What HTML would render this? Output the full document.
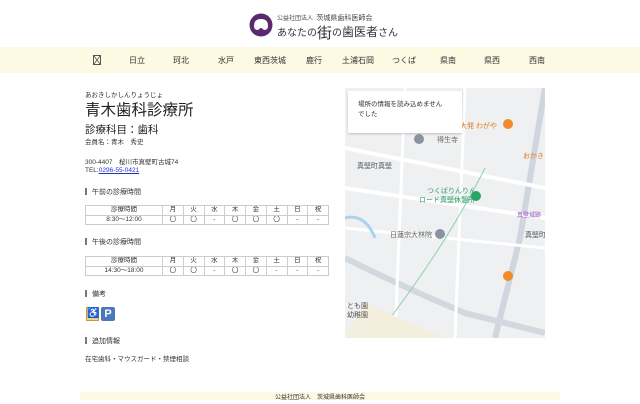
<!DOCTYPE html>
<html><head><meta charset="utf-8"><style>
*{margin:0;padding:0;box-sizing:border-box}
body{width:640px;height:400px;overflow:hidden;background:#fff;font-family:"Liberation Sans","Noto Sans CJK JP",sans-serif;color:#333;position:relative}
.abs{position:absolute;white-space:nowrap}
.nav{position:absolute;left:0;top:47px;width:640px;height:26px;background:#fdf9e3}
.nav span{position:absolute;top:8px;font-size:8px;color:#333;transform:translateX(-50%)}
table{position:absolute;left:85px;width:244px;table-layout:fixed;border-collapse:collapse;font-size:6.5px}
td{border:1px solid #ccc;height:9.5px;text-align:center;padding:0;line-height:8px;overflow:hidden}
td:first-child{width:77px}
.h{font-size:7px;left:85px}
.h:before{content:"";display:inline-block;width:2px;height:7px;background:#777;margin-right:5px;vertical-align:-1px}
</style></head><body>
<svg class="abs" style="left:249px;top:13px" width="24" height="24" viewBox="0 0 24 24"><circle cx="12" cy="12" r="11.5" fill="#5b2a6e"/><path d="M5 13 Q5 6 12 6 Q19 6 19 13 Q19 17 15 17 Q13 15 12 15 Q11 15 9 17 Q5 17 5 13Z" fill="#fff"/></svg>
<div class="abs" style="left:277px;top:13px;font-size:6px;color:#444">公益社団法人&nbsp;&nbsp;<span style="font-size:7px">茨城県歯科医師会</span></div>
<div class="abs" style="left:277px;top:22px;font-size:10px;color:#333">あなたの<span style="font-size:15px;vertical-align:-2px">街</span>の<span style="font-size:12px">歯医者</span>さん</div>
<div class="nav">
<svg style="position:absolute;left:93px;top:8px" width="8" height="10" viewBox="0 0 8 10"><rect x="0.5" y="0.5" width="7" height="9" fill="none" stroke="#555"/><path d="M1 1L7 9M7 1L1 9" stroke="#555" stroke-width="0.8"/></svg>
<span style="left:137px">日立</span><span style="left:181px">珂北</span><span style="left:226px">水戸</span><span style="left:270px">東西茨城</span><span style="left:314px">鹿行</span><span style="left:358px">土浦石岡</span><span style="left:404px">つくば</span><span style="left:448px">県南</span><span style="left:492px">県西</span><span style="left:537px">西南</span>
</div>
<div class="abs" style="left:85px;top:89px;font-size:6.5px">あおきしかしんりょうじょ</div>
<div class="abs" style="left:85px;top:98px;font-size:15.5px;color:#222">青木歯科診療所</div>
<div class="abs" style="left:85px;top:122px;font-size:10.5px;color:#222">診療科目：歯科</div>
<div class="abs" style="left:85px;top:136px;font-size:6.5px">会員名：青木　秀史</div>
<div class="abs" style="left:85px;top:156px;font-size:6.5px">300-4407　桜川市真壁町古城74</div>
<div class="abs" style="left:85px;top:167px;font-size:6.5px">TEL:<span style="color:#2233cc;text-decoration:underline">0296-55-0421</span></div>
<div class="abs h" style="top:187px">午前の診療時間</div>
<table style="top:205px"><tr><td>診療時間</td><td>月</td><td>火</td><td>水</td><td>木</td><td>金</td><td>土</td><td>日</td><td>祝</td></tr><tr><td>8:30～12:00</td><td>〇</td><td>〇</td><td>-</td><td>〇</td><td>〇</td><td>〇</td><td>-</td><td>-</td></tr></table>
<div class="abs h" style="top:237px">午後の診療時間</div>
<table style="top:256px"><tr><td>診療時間</td><td>月</td><td>火</td><td>水</td><td>木</td><td>金</td><td>土</td><td>日</td><td>祝</td></tr><tr><td>14:30～18:00</td><td>〇</td><td>〇</td><td>-</td><td>〇</td><td>〇</td><td>-</td><td>-</td><td>-</td></tr></table>
<div class="abs h" style="top:289px">備考</div>
<div class="abs" style="left:86px;top:307px;width:13px;height:14px;background:#f3d58a;border:1px solid #c89b3a;font-size:10px;color:#b07a10;text-align:center;line-height:12px">♿</div>
<div class="abs" style="left:101px;top:307px;width:14px;height:14px;background:#4a78b8;border-radius:2px;color:#fff;font-weight:bold;font-size:11px;text-align:center;line-height:14px">P</div>
<div class="abs h" style="top:336px">追加情報</div>
<div class="abs" style="left:85px;top:353px;font-size:6.5px">在宅歯科・マウスガード・禁煙相談</div>
<div class="abs" style="left:345px;top:88px;width:200px;height:250px;background:#eef0f2;overflow:hidden">
<svg width="200" height="250" viewBox="0 0 200 250">
<path d="M150 250 L175 150 L195 30 L200 0" stroke="#cfd6de" stroke-width="6" fill="none"/>
<path d="M0 170 Q60 200 120 225 L200 245" stroke="#d2d8de" stroke-width="6" fill="none"/>
<path d="M0 60 L200 100" stroke="#fff" stroke-width="4" fill="none"/>
<path d="M0 100 L200 130" stroke="#fff" stroke-width="4" fill="none"/>
<path d="M0 140 L200 160" stroke="#fff" stroke-width="3" fill="none"/>
<path d="M60 0 L50 250" stroke="#fff" stroke-width="3" fill="none"/>
<path d="M120 0 L110 250" stroke="#fff" stroke-width="3" fill="none"/>
<path d="M140 80 Q100 160 30 250" stroke="#8fd0b0" stroke-width="1" fill="none"/>
<path d="M0 130 Q20 125 30 150" stroke="#a8d4ef" stroke-width="3" fill="none"/>
<path d="M20 215 L100 250 L0 250Z" fill="#f3eedd"/>
<circle cx="163" cy="36" r="5" fill="#f08a2c"/><circle cx="163" cy="188" r="5" fill="#f08a2c"/>
<circle cx="131" cy="108" r="5" fill="#2aa566"/><circle cx="95" cy="146" r="5" fill="#8a949e"/><circle cx="74" cy="51" r="5" fill="#8a949e"/>
<text x="115" y="40" font-size="7" fill="#e07c20" font-family="Liberation Sans,Noto Sans CJK JP,sans-serif">大発 わがや</text>
<text x="178" y="70" font-size="7" fill="#e07c20" font-family="Liberation Sans,Noto Sans CJK JP,sans-serif">おかき</text>
<text x="92" y="54" font-size="7" fill="#666" font-family="Liberation Sans,Noto Sans CJK JP,sans-serif">得生寺</text>
<text x="12" y="80" font-size="7" fill="#555" font-family="Liberation Sans,Noto Sans CJK JP,sans-serif">真壁町真壁</text>
<text x="82" y="105" font-size="7" fill="#2a9d5f" font-family="Liberation Sans,Noto Sans CJK JP,sans-serif">つくばりんりん</text>
<text x="74" y="114" font-size="7" fill="#2a9d5f" font-family="Liberation Sans,Noto Sans CJK JP,sans-serif">ロード真壁休憩所</text>
<text x="172" y="129" font-size="6" fill="#9a4fc0" font-family="Liberation Sans,Noto Sans CJK JP,sans-serif">真壁城跡</text>
<text x="45" y="149" font-size="7" fill="#666" font-family="Liberation Sans,Noto Sans CJK JP,sans-serif">日蓮宗大林院</text>
<text x="180" y="149" font-size="7" fill="#555" font-family="Liberation Sans,Noto Sans CJK JP,sans-serif">真壁町</text>
<text x="2" y="220" font-size="7" fill="#555" font-family="Liberation Sans,Noto Sans CJK JP,sans-serif">とも園</text>
<text x="2" y="229" font-size="7" fill="#555" font-family="Liberation Sans,Noto Sans CJK JP,sans-serif">幼稚園</text>
</svg>
<div style="position:absolute;left:3px;top:3px;width:114px;height:42px;background:#fff;box-shadow:0 1px 2px rgba(0,0,0,.2);font-size:6.5px;padding:9px 0 0 10px;line-height:10px;color:#333">場所の情報を読み込めません<br>でした</div>
</div>
<div class="abs" style="left:80px;top:392px;width:480px;height:8px;background:#fdf9e3;font-size:6px;text-align:center;line-height:12px">公益社団法人　茨城県歯科医師会</div>
</body></html>
